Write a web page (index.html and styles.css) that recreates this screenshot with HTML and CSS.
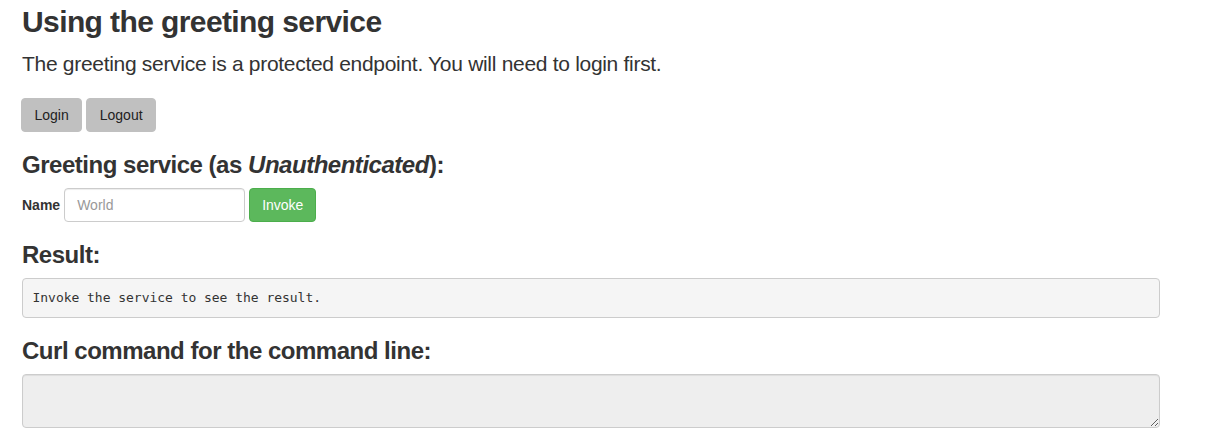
FILE: index.html
```html
<!DOCTYPE html>
<html>
<head>
<meta charset="utf-8">
<title>Greeting service</title>
<link rel="stylesheet" href="styles.css">
</head>
<body>
<div class="page">
  <h1 class="title">Using the greeting service</h1>
  <p class="lead">The greeting service is a protected endpoint. You will need to login first.</p>
  <div class="auth-buttons">
    <button class="btn btn-default" type="button">Login</button>
    <button class="btn btn-default" type="button">Logout</button>
  </div>
  <h3 class="section">Greeting service (as <em>Unauthenticated</em>):</h3>
  <form class="inline-form">
    <label class="name-label" for="name">Name</label>
    <input class="form-control name-input" id="name" type="text" placeholder="World">
    <button class="btn btn-success" type="button">Invoke</button>
  </form>
  <h3 class="section">Result:</h3>
  <pre class="result">Invoke the service to see the result.</pre>
  <h3 class="section">Curl command for the command line:</h3>
  <textarea class="form-control curl" rows="2" readonly></textarea>
</div>
</body>
</html>
```

FILE: styles.css
```css
* { box-sizing: border-box; }

html, body {
  margin: 0;
  background: #fff;
}

body {
  font-family: "Liberation Sans", Arial, Helvetica, sans-serif;
  font-size: 14px;
  line-height: 1.42857;
  color: #333;
}

.page {
  padding: 0 48px 0 22px;
  display: flow-root;
}

.title {
  font-size: 30px;
  font-weight: 700;
  line-height: 1.1;
  letter-spacing: -0.02em;
  margin: 5px 0 11px;
}

.lead {
  font-size: 21px;
  line-height: 1.4;
  font-weight: 400;
  margin: 0 0 20px;
  letter-spacing: -0.3px;
}

.auth-buttons {
  display: flex;
  gap: 4px;
  margin-left: -1px;
}

.btn {
  display: inline-block;
  font-family: inherit;
  font-size: 14px;
  line-height: 20px;
  padding: 6px 12px;
  border: 1px solid transparent;
  border-radius: 4px;
  cursor: pointer;
  margin: 0;
}

.btn-default {
  background: #c0c0c0;
  border-color: #c0c0c0;
  color: #222;
  padding: 6px 12.5px;
}

.btn-success {
  background: #5cb85c;
  border-color: #4cae4c;
  color: #fff;
}

.section {
  font-size: 24px;
  font-weight: 700;
  line-height: 1.1;
  letter-spacing: -0.02em;
  margin: 20px 0 9.5px;
}

.section em {
  font-style: italic;
}

.inline-form {
  display: flex;
  align-items: baseline;
  gap: 4px;
  margin: 0;
}

.name-label {
  font-weight: 700;
  font-size: 14px;
}

.form-control {
  font-family: inherit;
  font-size: 14px;
  line-height: 20px;
  color: #555;
  background: #fff;
  border: 1px solid #ccc;
  border-radius: 4px;
  box-shadow: inset 0 1px 1px rgba(0,0,0,.075);
  padding: 6px 12px;
}

.name-input {
  width: 181px;
  height: 34px;
}

.name-input::placeholder {
  color: #999;
}

.result {
  font-family: "DejaVu Sans Mono", "Liberation Mono", monospace;
  font-size: 13px;
  line-height: 1.42857;
  color: #333;
  background: #f5f5f5;
  border: 1px solid #ccc;
  border-radius: 4px;
  padding: 9.5px;
  margin: 0 0 10px;
  letter-spacing: -0.03px;
}

.curl {
  display: block;
  width: 100%;
  height: 54px;
  background: #eee;
  resize: vertical;
  margin: 0;
}
```
